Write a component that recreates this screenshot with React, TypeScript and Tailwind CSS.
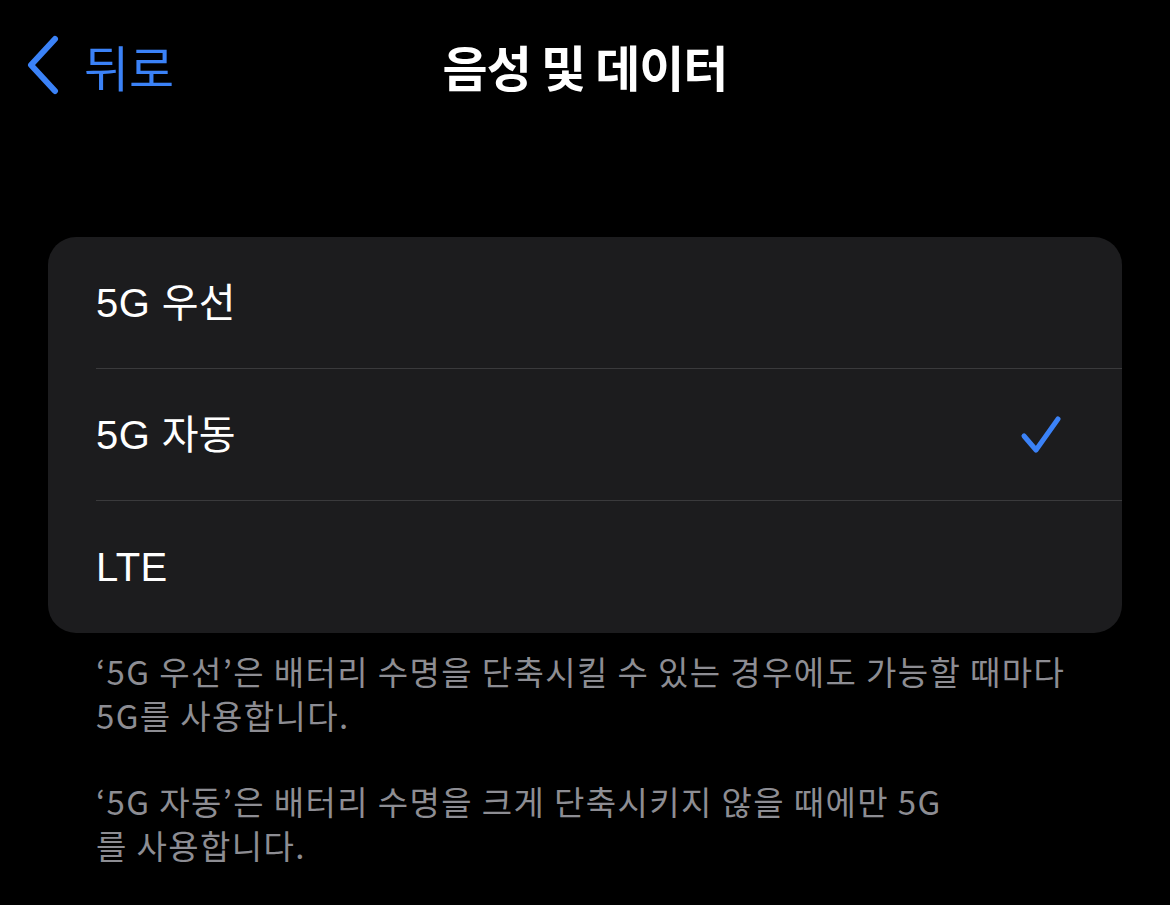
const kr = { fontFamily: '"Noto Sans CJK KR", "Noto Sans", sans-serif' };

const options = [
  { label: "5G 우선", checked: false },
  { label: "5G 자동", checked: true },
  { label: "LTE", checked: false },
];

function Chevron() {
  return (
    <svg width="40" height="60" viewBox="0 0 40 60" fill="none" aria-hidden="true">
      <path d="M31 4 L7 30 L31 56" stroke="#3b82f7" strokeWidth="6" strokeLinecap="round" strokeLinejoin="round" />
    </svg>
  );
}

function Check() {
  return (
    <svg width="42" height="40" viewBox="0 0 42 40" fill="none" aria-hidden="true">
      <path d="M4 21 L16 35 L38 4" stroke="#3b82f7" strokeWidth="5" strokeLinecap="round" strokeLinejoin="round" />
    </svg>
  );
}

export default function App() {
  return (
    <div className="min-h-[905px] w-[1170px] bg-black text-white" style={kr}>
      <header className="relative flex h-[130px] items-center px-6">
        <button className="flex items-center gap-[20px] text-[#3b82f7]">
          <Chevron />
          <span className="text-[49px] leading-none">뒤로</span>
        </button>
        <h1 className="absolute left-1/2 -translate-x-1/2 text-[49px] font-bold leading-none tracking-[-0.02em]">
          음성 및 데이터
        </h1>
      </header>

      <div className="px-12 pt-[107px]">
        <div className="overflow-hidden rounded-[28px] bg-[#1c1c1e]">
          {options.map((o, i) => (
            <div key={o.label} className="pl-12">
              <div
                className={`flex h-[132px] items-center justify-between pr-[60px] ${
                  i < options.length - 1 ? "border-b border-[#3a3a3c]" : ""
                }`}
              >
                <span className="text-[40px] leading-none tracking-[0.01em]" style={{ fontFamily: '"Liberation Sans", "Noto Sans CJK KR", sans-serif' }}>
                  {o.label}
                </span>
                {o.checked ? <Check /> : null}
              </div>
            </div>
          ))}
        </div>

        <div className="mt-[16px] space-y-[42px] pl-12 text-[33px] leading-[44px] tracking-[0.042em] text-[#8d8d93]">
          <p>
            ‘5G 우선’은 배터리 수명을 단축시킬 수 있는 경우에도 가능할 때마다
            <br />
            5G를 사용합니다.
          </p>
          <p>
            ‘5G 자동’은 배터리 수명을 크게 단축시키지 않을 때에만 5G
            <br />
            를 사용합니다.
          </p>
        </div>
      </div>
    </div>
  );
}
